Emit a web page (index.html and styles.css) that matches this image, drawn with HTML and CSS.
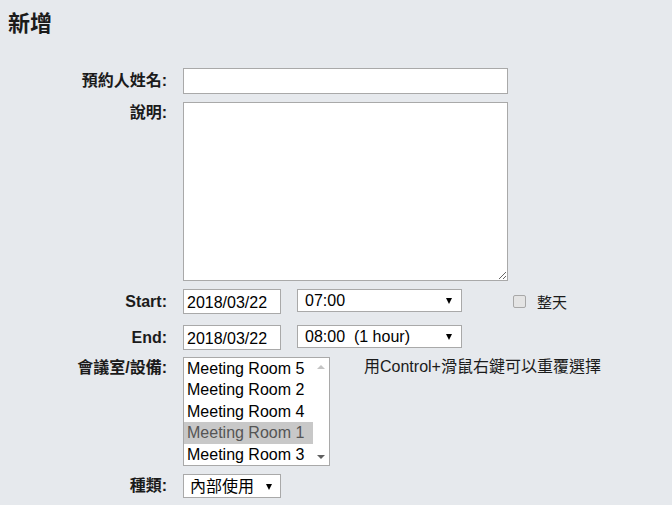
FILE: index.html
```html
<!DOCTYPE html>
<html lang="zh-Hant">
<head>
<meta charset="utf-8">
<title>新增</title>
<link rel="stylesheet" href="styles.css">
</head>
<body>
<h1 class="title">新增</h1>
<form class="form">
  <div class="row row-name">
    <label class="label">預約人姓名:</label>
    <input class="text-input" type="text">
  </div>
  <div class="row row-top row-desc">
    <label class="label label-top">說明:</label>
    <textarea class="textarea"></textarea>
  </div>
  <div class="row row-start">
    <label class="label">Start:</label>
    <input class="date-input" type="text" value="2018/03/22">
    <span class="select-wrap time-select"><select class="select"><option>07:00</option></select></span>
    <span class="allday"><span class="checkbox"></span><span class="allday-text">整天</span></span>
  </div>
  <div class="row row-end">
    <label class="label">End:</label>
    <input class="date-input" type="text" value="2018/03/22">
    <span class="select-wrap time-select"><select class="select"><option>08:00&nbsp;&nbsp;(1 hour)</option></select></span>
  </div>
  <div class="row row-top row-room">
    <label class="label label-top">會議室/設備:</label>
    <div class="listbox">
      <div class="list-items">
        <div class="list-item">Meeting Room 5</div>
        <div class="list-item">Meeting Room 2</div>
        <div class="list-item">Meeting Room 4</div>
        <div class="list-item selected">Meeting Room 1</div>
        <div class="list-item">Meeting Room 3</div>
      </div>
      <div class="scrollbar">
        <span class="arrow-up"></span>
        <span class="arrow-down"></span>
      </div>
    </div>
    <span class="hint">用Control+滑鼠右鍵可以重覆選擇</span>
  </div>
  <div class="row row-type">
    <label class="label">種類:</label>
    <span class="select-wrap type-select"><select class="select"><option>內部使用</option></select></span>
  </div>
</form>
</body>
</html>
```
FILE: styles.css
```css
html, body {
  margin: 0;
  padding: 0;
}
body {
  padding: 8px;
  background: #e6e9ed;
  font-family: "Liberation Sans", Arial, "Noto Sans CJK TC", sans-serif;
  color: #1b1b1b;
  height: 505px;
  box-sizing: border-box;
  overflow: hidden;
}
.title {
  margin: -2px 0 0 0;
  font-size: 22px;
  font-weight: bold;
  line-height: 30px;
  font-family: "Noto Sans CJK TC", sans-serif;
}
.form {
  margin-top: 32px;
}
.row {
  display: flex;
  align-items: center;
}
.row-top {
  align-items: flex-start;
}
.label {
  width: 159px;
  margin-right: 16px;
  text-align: right;
  font-weight: bold;
  font-size: 16px;
  line-height: 20px;
}
.label-top {
  padding-top: 1px;
}
.row-name { margin-bottom: 8px; }
.row-desc { margin-bottom: 8px; }
.row-start { margin-bottom: 11px; }
.row-end { margin-bottom: 7px; }
.row-room { margin-bottom: 8px; }

input, select, textarea {
  font-family: "Liberation Sans", Arial, "Noto Sans CJK TC", sans-serif;
  color: #000;
  margin: 0;
  box-sizing: border-box;
  outline: none;
}
.text-input {
  width: 325px;
  height: 26px;
  border: 1px solid #a9a9a9;
  background: #fff;
  font-size: 16px;
  padding: 0 3px;
}
.textarea {
  width: 325px;
  height: 179px;
  border: 1px solid #a9a9a9;
  background: #fff;
  font-size: 16px;
  padding: 2px;
}
.date-input {
  width: 98px;
  height: 25px;
  border: 1px solid #a9a9a9;
  background: #fff;
  font-size: 16px;
  padding: 2px 3px 0 3px;
}
.select-wrap {
  position: relative;
  display: inline-block;
}
.select-wrap::after {
  content: "";
  position: absolute;
  right: 10px;
  top: 9px;
  border-left: 3.5px solid transparent;
  border-right: 3.5px solid transparent;
  border-top: 6px solid #000;
  pointer-events: none;
}
.select {
  appearance: none;
  -webkit-appearance: none;
  border: 1px solid #a9a9a9;
  border-radius: 0;
  background: #fff;
  font-size: 16px;
  height: 23px;
  padding: 0 0 0 7px;
  line-height: 21px;
}
.time-select {
  margin-left: 16px;
}
.time-select .select {
  width: 165px;
  height: 23px;
}
.row-start .select-wrap, .row-end .select-wrap {
  align-self: flex-start;
}
.allday {
  display: inline-flex;
  align-items: center;
  margin-left: 51px;
}
.checkbox {
  display: inline-block;
  width: 11px;
  height: 11px;
  border: 1px solid #a8a8a8;
  border-radius: 2px;
  background: #e4e4e4;
}
.allday-text {
  margin-left: 11px;
  font-size: 15px;
  font-family: "Noto Sans CJK TC", sans-serif;
}
.listbox {
  width: 147px;
  height: 109px;
  box-sizing: border-box;
  border: 1px solid #a9a9a9;
  background: #fff;
  display: flex;
}
.list-items {
  flex: 1;
  padding-top: 0;
}
.list-item {
  height: 21.4px;
  line-height: 21px;
  font-size: 16px;
  padding-left: 3px;
  color: #000;
  white-space: nowrap;
}
.list-item.selected {
  background: #c8c8c8;
  color: #555;
}
.scrollbar {
  width: 16px;
  display: flex;
  flex-direction: column;
  justify-content: space-between;
  align-items: center;
  padding: 7px 0 6px;
  box-sizing: border-box;
}
.arrow-up {
  width: 0;
  height: 0;
  border-left: 4px solid transparent;
  border-right: 4px solid transparent;
  border-bottom: 4px solid #c4c4c4;
}
.arrow-down {
  width: 0;
  height: 0;
  border-left: 4px solid transparent;
  border-right: 4px solid transparent;
  border-top: 4px solid #606060;
}
.hint {
  margin-left: 34px;
  margin-top: 0;
  font-size: 16px;
  line-height: 20px;
}
.type-select .select {
  width: 98px;
  height: 24px;
  padding-left: 6px;
}
.type-select::after {
  right: 9px;
  top: 10px;
}
```
